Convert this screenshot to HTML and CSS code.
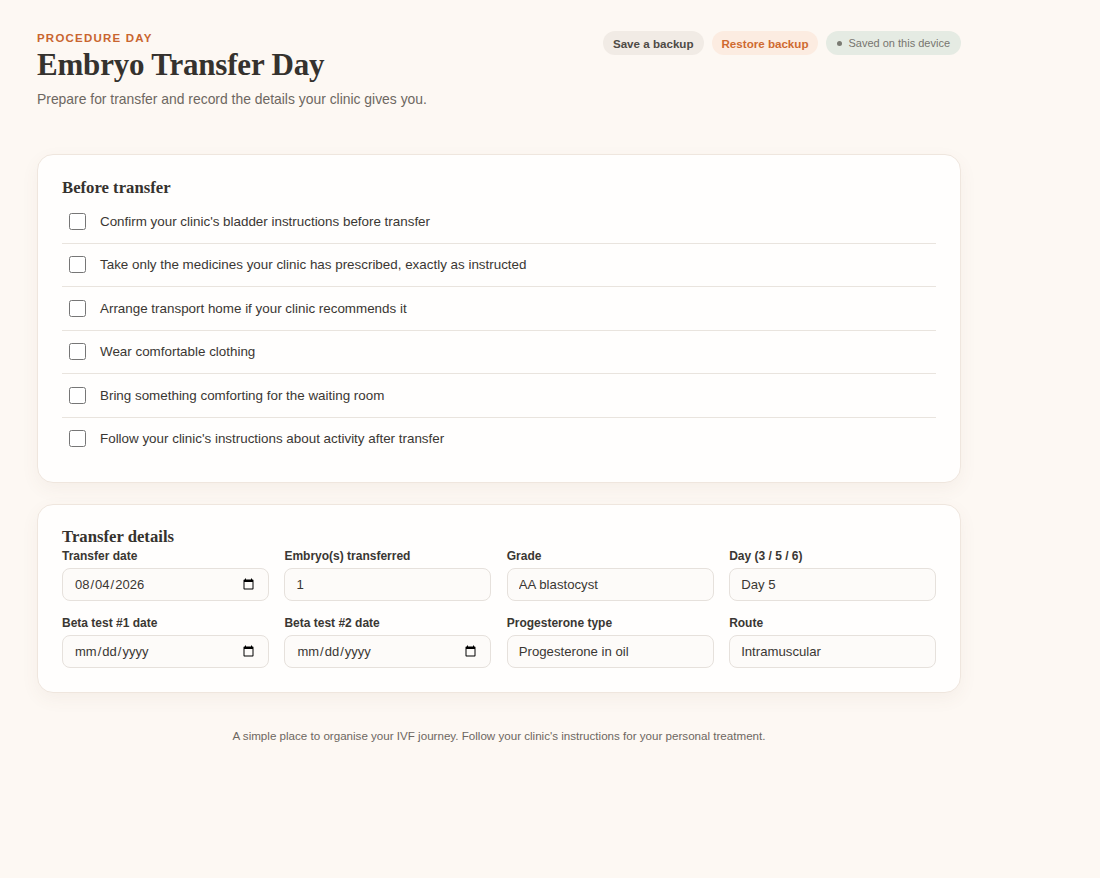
FILE: index.html
```html
<!DOCTYPE html>
<html lang="en">
<head>
<meta charset="utf-8">
<title>Embryo Transfer Day</title>
<link rel="stylesheet" href="styles.css">
</head>
<body>
<div class="page">
  <header class="top">
    <div class="intro">
      <div class="eyebrow">PROCEDURE DAY</div>
      <h1 class="title">Embryo Transfer Day</h1>
      <p class="lead">Prepare for transfer and record the details your clinic gives you.</p>
    </div>
    <div class="actions">
      <button class="pill pill-save">Save a backup</button>
      <button class="pill pill-restore">Restore backup</button>
      <span class="pill pill-status"><span class="dot"></span>Saved on this device</span>
    </div>
  </header>

  <section class="card card-check">
    <h2 class="card-title">Before transfer</h2>
    <ul class="checklist">
      <li class="check-row"><label><input type="checkbox" class="check"><span>Confirm your clinic's bladder instructions before transfer</span></label></li>
      <li class="check-row"><label><input type="checkbox" class="check"><span>Take only the medicines your clinic has prescribed, exactly as instructed</span></label></li>
      <li class="check-row"><label><input type="checkbox" class="check"><span>Arrange transport home if your clinic recommends it</span></label></li>
      <li class="check-row"><label><input type="checkbox" class="check"><span>Wear comfortable clothing</span></label></li>
      <li class="check-row"><label><input type="checkbox" class="check"><span>Bring something comforting for the waiting room</span></label></li>
      <li class="check-row"><label><input type="checkbox" class="check"><span>Follow your clinic's instructions about activity after transfer</span></label></li>
    </ul>
  </section>

  <section class="card card-details">
    <h2 class="card-title">Transfer details</h2>
    <div class="grid">
      <label class="field"><span class="field-label">Transfer date</span><input class="input input-date" type="date" value="2026-08-04"></label>
      <label class="field"><span class="field-label">Embryo(s) transferred</span><input class="input" type="text" value="1"></label>
      <label class="field"><span class="field-label">Grade</span><input class="input" type="text" value="AA blastocyst"></label>
      <label class="field"><span class="field-label">Day (3 / 5 / 6)</span><input class="input" type="text" value="Day 5"></label>
      <label class="field"><span class="field-label">Beta test #1 date</span><input class="input input-date" type="date"></label>
      <label class="field"><span class="field-label">Beta test #2 date</span><input class="input input-date" type="date"></label>
      <label class="field"><span class="field-label">Progesterone type</span><input class="input" type="text" value="Progesterone in oil"></label>
      <label class="field"><span class="field-label">Route</span><input class="input" type="text" value="Intramuscular"></label>
    </div>
  </section>

  <footer class="foot">A simple place to organise your IVF journey. Follow your clinic's instructions for your personal treatment.</footer>
</div>
</body>
</html>
```

FILE: styles.css
```css
* { box-sizing: border-box; }
html, body {
  margin: 0;
  padding: 0;
  background: #fdf8f3;
  font-family: "Liberation Sans", Arial, sans-serif;
  color: #3a3733;
}
.page {
  width: 924px;
  margin-left: 37px;
  padding-top: 30px;
}
.top {
  display: flex;
  justify-content: space-between;
  align-items: flex-start;
  margin-bottom: 46px;
}
.eyebrow {
  font-size: 11.5px;
  font-weight: 700;
  letter-spacing: 1.2px;
  color: #c9652f;
  margin-top: 1px;
  line-height: 14px;
}
.title {
  font-family: "Liberation Serif", "Times New Roman", serif;
  font-weight: 700;
  font-size: 31px;
  line-height: 36px;
  margin: 2px 0 0 0;
  color: #35322e;
  letter-spacing: -0.2px;
}
.lead {
  margin: 7px 0 0 0;
  font-size: 13.9px;
  line-height: 18px;
  color: #6d6761;
}
.actions {
  display: flex;
  gap: 8px;
  align-items: center;
  margin-top: 1px;
}
.pill {
  border: none;
  border-radius: 12px;
  height: 24px;
  padding: 0 10px;
  font-family: "Liberation Sans", Arial, sans-serif;
  font-size: 11.6px;
  display: inline-flex;
  align-items: center;
}
.pill-save {
  background: #f1ebe5;
  color: #4e4a45;
  font-weight: 700;
}
.pill-restore {
  background: #fcece1;
  color: #cf6a30;
  font-weight: 700;
}
.pill-status {
  background: #e5ebe3;
  color: #77756f;
  font-size: 11px;
  padding: 0 11px;
}
.dot {
  width: 5px;
  height: 5px;
  border-radius: 50%;
  background: #7a7a72;
  margin-right: 6px;
}
.card {
  background: #fffefd;
  border: 1px solid #efe6de;
  border-radius: 16px;
  box-shadow: 0 6px 18px rgba(120, 90, 60, 0.06);
  margin-bottom: 21px;
}
.card-check {
  padding: 23px 24px 22px 24px;
}
.card-title {
  font-family: "Liberation Serif", "Times New Roman", serif;
  font-weight: 700;
  font-size: 16.7px;
  line-height: 20px;
  margin: 0;
  color: #35322e;
}
.checklist {
  list-style: none;
  margin: 2px 0 0 0;
  padding: 0;
}
.check-row {
  border-bottom: 1px solid #e9e4de;
}
.check-row:last-child { border-bottom: none; }
.check-row label {
  display: flex;
  align-items: center;
  height: 42.5px;
  padding-left: 7px;
  font-size: 13.4px;
  color: #3a3733;
}
.check {
  width: 17px;
  height: 17px;
  margin: 0 14px 0 0;
  accent-color: #c9652f;
}
.card-details {
  padding: 22px 24px 24px 24px;
}
.grid {
  display: grid;
  grid-template-columns: repeat(4, 1fr);
  column-gap: 15.5px;
  row-gap: 14.5px;
  margin-top: 2px;
}
.field {
  display: flex;
  flex-direction: column;
}
.field-label {
  font-size: 12px;
  font-weight: 700;
  color: #3a3733;
  line-height: 15px;
  margin-bottom: 4px;
}
.input {
  height: 33px;
  border: 1px solid #e6e1dc;
  border-radius: 8px;
  background: #fdfbf9;
  padding: 0 11px;
  font-family: "Liberation Sans", Arial, sans-serif;
  font-size: 13.2px;
  color: #3a3733;
  width: 100%;
}
.input-date {
  font-size: 13px;
}
.foot {
  text-align: center;
  font-size: 11.6px;
  color: #6d6761;
  margin-top: 36px;
}
```
